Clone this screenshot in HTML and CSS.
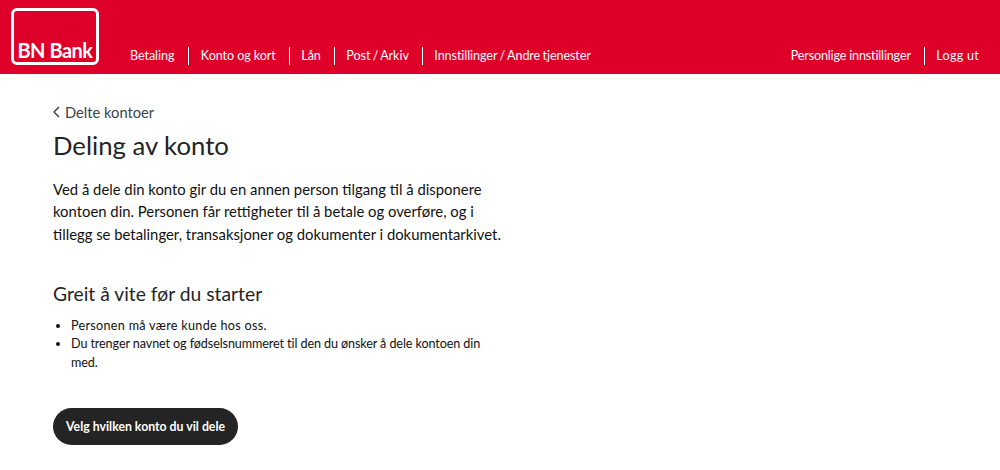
FILE: index.html
```html
<!DOCTYPE html>
<html lang="no">
<head>
<meta charset="utf-8">
<title>Deling av konto</title>
<link rel="stylesheet" href="styles.css">
</head>
<body>
<header class="topbar">
  <a class="logo" href="#"><span>BN Bank</span></a>
  <nav class="nav">
    <a href="#">Betaling</a>
    <a href="#">Konto og kort</a>
    <a href="#">Lån</a>
    <a class="slash" href="#">Post / Arkiv</a>
    <a class="slash" href="#">Innstillinger / Andre tjenester</a>
  </nav>
  <nav class="nav nav-right">
    <a href="#">Personlige innstillinger</a>
    <a href="#">Logg ut</a>
  </nav>
</header>
<main class="content">
  <a class="back" href="#">
    <svg class="chev" width="7" height="12" viewBox="0 0 7 12"><path d="M6 1 1 6l5 5" fill="none" stroke="#3c4448" stroke-width="1.5"/></svg>
    Delte kontoer
  </a>
  <h1>Deling av konto</h1>
  <p class="lead">Ved å dele din konto gir du en annen person tilgang til å disponere kontoen din. Personen får rettigheter til å betale og overføre, og i tillegg se betalinger, transaksjoner og dokumenter i dokumentarkivet.</p>
  <h2>Greit å vite før du starter</h2>
  <ul class="list">
    <li>Personen må være kunde hos oss.</li>
    <li>Du trenger navnet og fødselsnummeret til den du ønsker å dele kontoen din med.</li>
  </ul>
  <button class="cta" type="button">Velg hvilken konto du vil dele</button>
</main>
</body>
</html>
```
FILE: styles.css
```css
* { box-sizing: border-box; }
html, body { margin: 0; background: #fff; }
body { font-family: Lato, "Open Sans", sans-serif; color: #1a1a1a; height: 470px; overflow: hidden; }
a { color: inherit; text-decoration: none; }
.topbar { display: flex; align-items: flex-end; height: 74px; background: #df0029; color: #fff; padding: 0 8px 9px 11px; }
.logo { display: flex; align-items: flex-end; justify-content: center; width: 88px; height: 57px; border: 3px solid #fff; border-radius: 6px; font-weight: 700; font-size: 20px; line-height: 22px; padding-bottom: 1px; letter-spacing: -0.5px; }
.nav { display: flex; align-items: center; margin-left: 19px; font-size: 12.6px; line-height: 18px; letter-spacing: -0.08px; }
.nav a { padding: 0 13px 0 11.5px; border-left: 1.5px solid #fff; }
.nav a:first-child { border-left: 0; padding-left: 12px; padding-right: 14px; }
.nav a.slash { word-spacing: -0.8px; }
.nav-right { margin-left: auto; }
.nav-right a:first-child { letter-spacing: -0.17px; padding-right: 13px; }
.nav-right a:last-child { letter-spacing: 0.25px; }
.content { padding: 27px 0 0 53px; width: 510px; }
.back { display: flex; align-items: center; gap: 5px; font-size: 14.7px; line-height: 22px; color: #3c4448; }
.chev { flex: none; }
h1 { margin: 5px 0 0; font-size: 25.7px; font-weight: 400; line-height: 34px; color: #1f2426; }
.lead { margin: 16px 0 0; font-size: 14.85px; line-height: 22.4px; color: #111; }
h2 { margin: 35.5px 0 0; font-size: 19.3px; font-weight: 400; line-height: 26px; color: #1f2426; }
.list { margin: 10px 0 0; padding: 0 0 0 18px; width: 448px; font-size: 12.6px; line-height: 18.5px; color: #111; }
.list li:first-child { letter-spacing: 0.3px; }
.list li:last-child { letter-spacing: -0.1px; }
.cta { display: block; margin-top: 36px; height: 37px; padding: 0 13px; border: 0; border-radius: 19px; background: #242424; color: #fff; font: 700 12.3px Lato, sans-serif; }
```
